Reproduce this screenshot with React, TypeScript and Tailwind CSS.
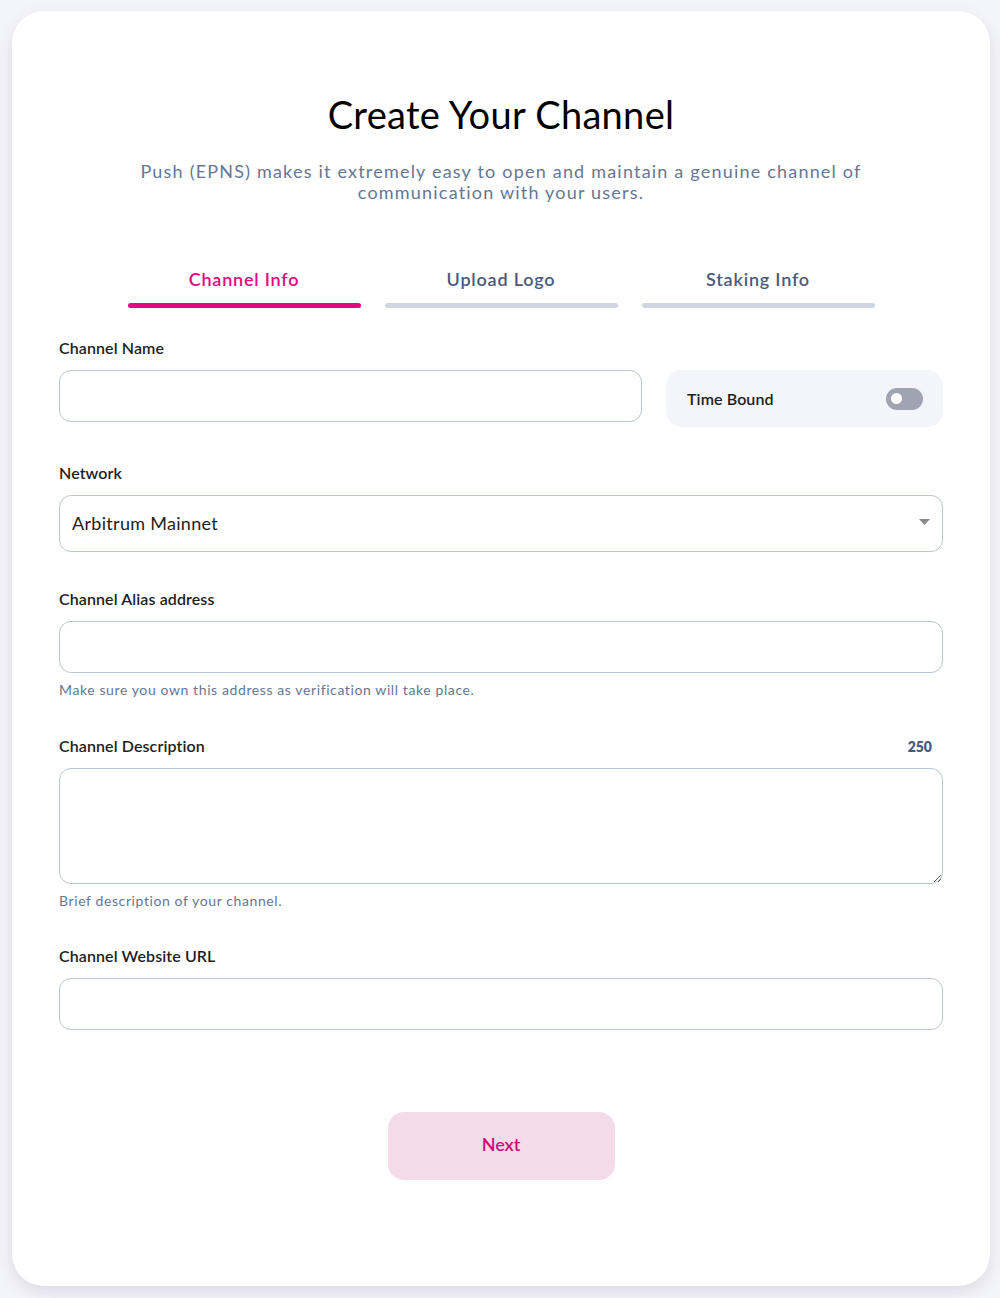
import React, { useState } from 'react';

const tabs = ['Channel Info', 'Upload Logo', 'Staking Info'];

const Label: React.FC<{ children: React.ReactNode; right?: React.ReactNode }> = ({ children, right }) => (
  <div className="flex items-center justify-between h-5 mb-3">
    <span className="text-[16px] font-semibold text-[#1e1e1e] leading-5 tracking-[0.1px]">{children}</span>
    {right}
  </div>
);

const Helper: React.FC<{ children: React.ReactNode }> = ({ children }) => (
  <p className="mt-2 text-[14px] leading-[18px] tracking-[0.6px] text-[#657795]">{children}</p>
);

const inputCls =
  'block w-full h-[52px] rounded-[12px] border border-[#bac4d6] bg-white px-3 text-[16px] text-black outline-none';

const App: React.FC = () => {
  const [timeBound, setTimeBound] = useState(false);
  const [desc, setDesc] = useState('');

  return (
    <div className="min-h-[1298px] bg-[#f4f5fa] pt-[11px] pl-[12px] pr-[10px] pb-[13px] font-['Lato',sans-serif]">
      <div className="rounded-[32px] bg-white shadow-[0_6px_16px_rgba(120,90,140,0.18)] px-[47px] pt-[80px] pb-[106px]">
        {/* Header */}
        <h1 className="text-center text-[38px] leading-[46px] font-normal text-black tracking-[0.3px]">
          Create Your Channel
        </h1>
        <p className="mt-[24px] text-center text-[18px] leading-[21px] tracking-[1.2px] text-[#657795]">
          Push (EPNS) makes it extremely easy to open and maintain a genuine channel of
          <br />
          communication with your users.
        </p>

        {/* Steps */}
        <div className="mt-[65px] mx-auto w-[747px] grid grid-cols-3 gap-[24px]">
          {tabs.map((tab, i) => (
            <div key={tab} className="flex flex-col items-center">
              <span
                className={
                  i === 0
                    ? 'text-[18px] leading-[22px] font-semibold tracking-[0.8px] text-[#e20880]'
                    : 'text-[18px] leading-[22px] font-semibold tracking-[0.8px] text-[#4a5a7e]'
                }
              >
                {tab}
              </span>
              <div
                className={
                  i === 0
                    ? 'mt-[13px] h-[5px] w-full rounded-full bg-[#e20880]'
                    : 'mt-[13px] h-[5px] w-full rounded-full bg-[#cfd5e1]'
                }
              />
            </div>
          ))}
        </div>

        {/* Channel name + time bound */}
        <div className="mt-[30px] flex gap-[24px] items-end">
          <div className="flex-1">
            <Label>Channel Name</Label>
            <input className={inputCls} />
          </div>
          <div className="w-[277px] h-[57px] -mb-[5px] rounded-[16px] bg-[#f4f5fa] flex items-center justify-between pl-[21px] pr-[20px]">
            <span className="text-[16px] font-semibold text-[#1e1e1e] tracking-[0.1px]">Time Bound</span>
            <button
              onClick={() => setTimeBound(!timeBound)}
              className={
                timeBound
                  ? 'w-[37px] h-[22px] rounded-full bg-[#e20880] flex items-center justify-end px-[4px]'
                  : 'w-[37px] h-[22px] rounded-full bg-[#a0a3b1] flex items-center justify-start px-[5px]'
              }
            >
              <span className="block w-[11px] h-[11px] rounded-full bg-white" />
            </button>
          </div>
        </div>

        {/* Network */}
        <div className="mt-[41px]">
          <Label>Network</Label>
          <div className="relative">
            <select className="appearance-none block w-full h-[57px] rounded-[12px] border border-[#bac4d6] bg-white pl-[12px] pr-8 text-[18px] text-[#1e1e1e] outline-none tracking-[0.3px]">
              <option>Arbitrum Mainnet</option>
              <option>Polygon Mainnet</option>
              <option>Ethereum Mainnet</option>
            </select>
            <svg
              className="pointer-events-none absolute right-[13px] top-[24px]"
              width="11"
              height="6"
              viewBox="0 0 11 6"
            >
              <path d="M0 0h11L5.5 6z" fill="#8a8a8a" />
            </svg>
          </div>
        </div>

        {/* Alias */}
        <div className="mt-[37px]">
          <Label>Channel Alias address</Label>
          <input className={inputCls} />
          <Helper>Make sure you own this address as verification will take place.</Helper>
        </div>

        {/* Description */}
        <div className="mt-[37px]">
          <Label right={<span className="pr-[11px] text-[14px] font-extrabold text-[#4a5a7e]">{250 - desc.length}</span>}>
            Channel Description
          </Label>
          <textarea
            value={desc}
            maxLength={250}
            onChange={(e) => setDesc(e.target.value)}
            className="block w-full h-[116px] rounded-[12px] border border-[#bac4d6] bg-white px-3 py-2 text-[16px] outline-none"
          />
          <Helper>Brief description of your channel.</Helper>
        </div>

        {/* Website */}
        <div className="mt-[36px]">
          <Label>Channel Website URL</Label>
          <input className={inputCls} />
        </div>

        <div className="mt-[82px] flex justify-center">
          <button className="w-[227px] h-[68px] rounded-[16px] bg-[#f5dbe9] text-[18px] font-semibold leading-none pb-[4px] text-[#d0077a]">
            Next
          </button>
        </div>
      </div>
    </div>
  );
};

export default App;
